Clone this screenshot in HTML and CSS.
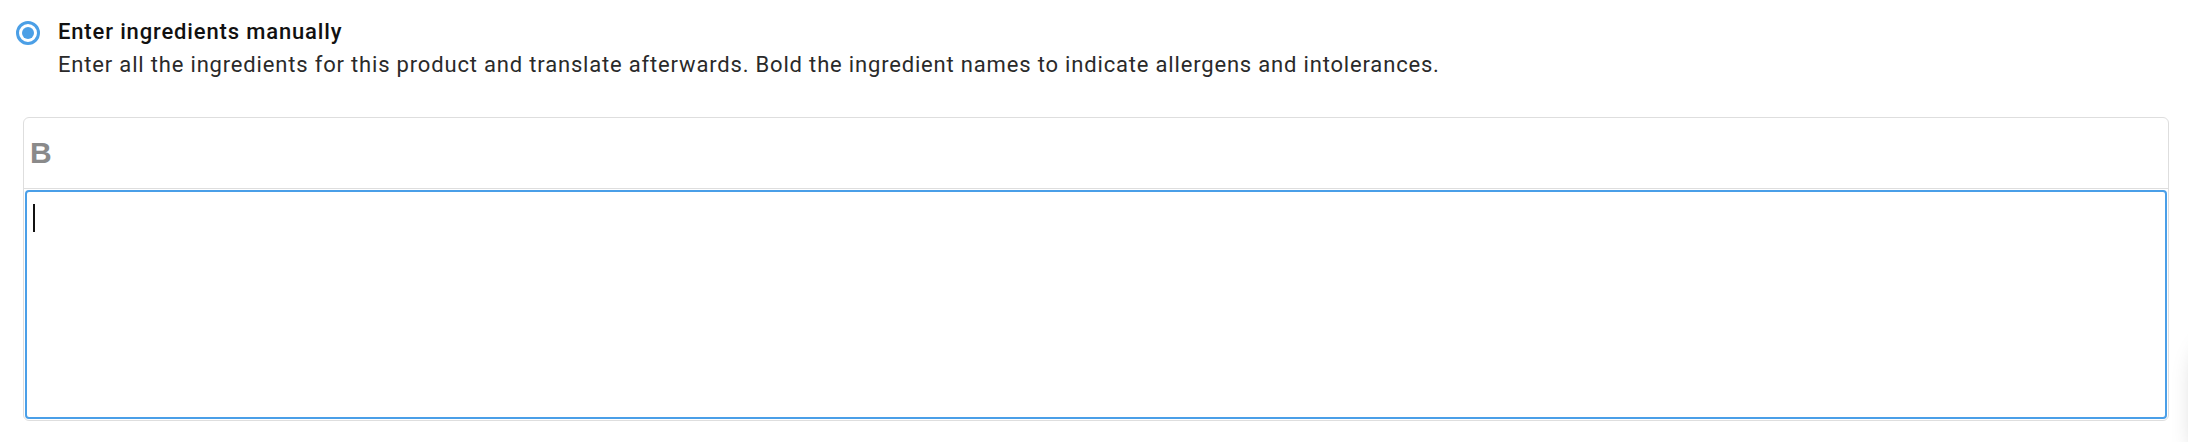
FILE: index.html
```html
<!DOCTYPE html>
<html lang="en">
<head>
<meta charset="utf-8">
<title>Ingredients</title>
<link rel="stylesheet" href="styles.css">
</head>
<body>
<div class="page">
  <label class="option">
    <span class="radio"><span class="radio-dot"></span></span>
    <span class="option-text">
      <span class="option-title">Enter ingredients manually</span>
      <span class="option-desc">Enter all the ingredients for this product and translate afterwards. Bold the ingredient names to indicate allergens and intolerances.</span>
    </span>
  </label>
  <div class="editor">
    <div class="toolbar">
      <button class="tool-bold" type="button">B</button>
    </div>
    <div class="editor-area"><span class="caret"></span></div>
  </div>
</div>
<div class="fab-shadow"></div>
</body>
</html>
```
FILE: styles.css
```css
html, body {
  margin: 0;
  padding: 0;
  background: #ffffff;
  overflow: hidden;
}
body {
  font-family: Roboto, "Noto Sans", sans-serif;
  color: #222;
  width: 2188px;
  height: 442px;
  position: relative;
}
.page {
  padding: 15px 19px 0 23px;
  display: flex;
  flex-direction: column;
}
.option {
  display: flex;
  align-items: flex-start;
  margin-left: -7px;
}
.radio {
  width: 24px;
  height: 24px;
  border: 3px solid #4b9fe6;
  border-radius: 50%;
  box-sizing: border-box;
  display: flex;
  align-items: center;
  justify-content: center;
  margin-top: 6px;
  margin-right: 18px;
  flex: none;
}
.radio-dot {
  width: 12px;
  height: 12px;
  border-radius: 50%;
  background: #4b9fe6;
}
.option-text {
  display: flex;
  flex-direction: column;
}
.option-title {
  font-size: 22px;
  line-height: 33px;
  font-weight: 500;
  letter-spacing: 0.85px;
  color: #111;
}
.option-desc {
  font-size: 22px;
  line-height: 33px;
  letter-spacing: 0.82px;
  color: #2a2a2a;
}
.editor {
  margin-top: 36px;
  border: 1px solid #dedede;
  border-radius: 6px;
  height: 304px;
  box-sizing: border-box;
  display: flex;
  flex-direction: column;
}
.toolbar {
  height: 70px;
  border-bottom: 1px solid #dedede;
  display: flex;
  align-items: center;
  padding-left: 6px;
  flex: none;
}
.tool-bold {
  font-family: "Liberation Sans", Arial, sans-serif;
  font-weight: bold;
  font-size: 30px;
  line-height: normal;
  color: #8a8a8a;
  background: none;
  border: 0;
  padding: 0;
  margin: 0;
  cursor: pointer;
}
.editor-area {
  flex: 1;
  margin: 1px;
  border: 2px solid #4a9fe8;
  border-radius: 4px;
  padding: 12px 6px;
}
.caret {
  display: block;
  width: 2px;
  height: 28px;
  background: #111;
}
.fab-shadow {
  position: absolute;
  left: 2196px;
  top: 330px;
  width: 80px;
  height: 112px;
  border-radius: 40px 40px 0 0;
  box-shadow: 0 6px 24px rgba(0, 0, 0, 0.22);
}
```
